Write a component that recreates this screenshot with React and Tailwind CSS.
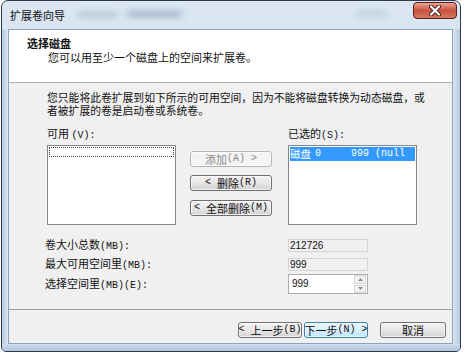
import React from 'react'

const Hint = ({ children }) => (
  <span className="font-['Liberation_Mono',monospace] text-[10px] whitespace-pre">{children}</span>
)

function Btn({ children, variant = 'normal', className = '' }) {
  const styles = {
    normal: 'border-[#707070] bg-linear-to-b from-[#f3f3f3] via-[#e6e6e6] to-[#d3d3d3] text-[#111]',
    disabled: 'border-[#b5b8ba] bg-[#f4f4f4] text-[#8a8a8a]',
    primary: 'border-[#3c7fb1] bg-linear-to-b from-[#eaf6fd] via-[#d9f0fc] to-[#bee6fd] text-[#111]',
  }
  return (
    <div
      className={`h-[16px] flex items-center justify-center rounded-[3px] border text-[11px] leading-none whitespace-nowrap shadow-[inset_0_0_0_1px_rgba(255,255,255,0.7)] ${styles[variant]} ${className}`}
    >
      {children}
    </div>
  )
}

function CloseButton() {
  return (
    <div className="absolute right-[3px] top-[1px] w-[44px] h-[17px] rounded-[4px] border border-[#5a2019] bg-linear-to-b from-[#e9a493] via-[#c9523c] to-[#d27b63] flex items-center justify-center">
      <svg width="14" height="11" viewBox="0 0 14 11">
        <path d="M3 1.5 L11 9.5 M11 1.5 L3 9.5" stroke="#4a1d17" strokeWidth="4" strokeLinecap="round" />
        <path d="M3 1.5 L11 9.5 M11 1.5 L3 9.5" stroke="#ffffff" strokeWidth="2.2" strokeLinecap="round" />
      </svg>
    </div>
  )
}

export default function App() {
  return (
    <div className="w-[466px] h-[359px] bg-white pl-[1px] overflow-hidden font-['Noto_Sans_CJK_SC',sans-serif] text-[#111]">
      <div className="w-[460px] h-[352px] border border-[#2c3a4b] rounded-t-[7px] rounded-b-[5px] overflow-hidden flex flex-col bg-linear-to-b from-[#dbe6f2] to-[#c4d6ea]">
        {/* title bar */}
        <div className="relative h-[28px] flex items-center pl-[8px]">
          <div className="absolute left-[75px] top-[11px] w-[40px] h-[5px] rounded-full bg-[#9aa9ba] blur-[3px] opacity-60" />
          <div className="absolute left-[125px] top-[10px] w-[55px] h-[6px] rounded-full bg-[#7f90a5] blur-[3px] opacity-60" />
          <div className="absolute left-[355px] top-[10px] w-[30px] h-[5px] rounded-full bg-[#a3b1c2] blur-[3px] opacity-50" />
          <span className="relative text-[11px] leading-none">扩展卷向导</span>
          <CloseButton />
        </div>

        <div className="flex h-[315px]">
          <div className="w-[6px] bg-linear-to-r from-[#b7cbe2] to-[#dce7f3]" />
          {/* client */}
          <div className="w-[445px] border border-[#8ea3ba] bg-[#f0f0f0] flex flex-col">
            <div className="h-[53px] bg-white border-b border-[#b4b4b4]">
              <div className="pt-[7px] pl-[18px] text-[11px] leading-[12px] font-bold">选择磁盘</div>
              <div className="mt-[2px] pl-[39px] text-[11px] leading-[12px]">您可以用至少一个磁盘上的空间来扩展卷。</div>
            </div>

            <div className="pl-[38px] pt-[8px] text-[10.8px] leading-[13px] whitespace-nowrap">
              <div>您只能将此卷扩展到如下所示的可用空间，因为不能将磁盘转换为动态磁盘，或</div>
              <div>者被扩展的卷是启动卷或系统卷。</div>
            </div>

            <div className="mt-[10px] pl-[38px] flex text-[11px] leading-[12px]">
              <div className="w-[241px]">
                可用 <Hint>(V):</Hint>
              </div>
              <div>
                已选的<Hint>(S):</Hint>
              </div>
            </div>

            <div className="mt-[3px] pl-[38px] flex">
              <div className="w-[129px] h-[80px] bg-white border border-[#828790] p-[1px]">
                <div className="h-[10px] border border-dotted border-[#444]" />
              </div>
              <div className="ml-[14px] w-[82px] pt-[6px] flex flex-col">
                <Btn variant="disabled">
                  添加<Hint>(A) &gt;</Hint>
                </Btn>
                <Btn className="mt-[8px]">
                  <Hint>&lt; </Hint>删除<Hint>(R)</Hint>
                </Btn>
                <Btn className="mt-[9px]">
                  <Hint>&lt; </Hint>全部删除<Hint>(M)</Hint>
                </Btn>
              </div>
              <div className="ml-[16px] w-[129px] h-[80px] bg-white border border-[#828790] p-[1px] overflow-hidden">
                <div className="h-[14px] bg-[#3399ff] text-white flex items-center whitespace-nowrap text-[10.5px] leading-none">
                  <span>磁盘</span>
                  <span className="ml-[4px] font-['Liberation_Mono',monospace] text-[10px]">0</span>
                  <span className="ml-[30px] font-['Liberation_Mono',monospace] text-[10px] whitespace-pre">999 (null</span>
                </div>
              </div>
            </div>

            <div className="pl-[36px] text-[11px] leading-[12px]">
              <div className="mt-[14px] flex items-center h-[13px]">
                <div className="w-[243px]">
                  卷大小总数<Hint>(MB):</Hint>
                </div>
                <div className="w-[80px] h-[13px] border border-[#d4d4d4] bg-[#f0f0f0] pl-[1px] flex items-center font-['Liberation_Sans',sans-serif] text-[10px]">
                  212726
                </div>
              </div>
              <div className="mt-[6px] flex items-center h-[13px]">
                <div className="w-[243px]">
                  最大可用空间里<Hint>(MB):</Hint>
                </div>
                <div className="w-[80px] h-[13px] border border-[#d4d4d4] bg-[#f0f0f0] pl-[1px] flex items-center font-['Liberation_Sans',sans-serif] text-[10px]">
                  999
                </div>
              </div>
              <div className="mt-[3px] flex items-center h-[20px]">
                <div className="w-[243px]">
                  选择空间里<Hint>(MB)(E):</Hint>
                </div>
                <div className="w-[80px] h-[20px] border border-[#abadb3] bg-white flex items-center">
                  <span className="pl-[3px] flex-1 font-['Liberation_Sans',sans-serif] text-[10px]">999</span>
                  <div className="w-[12px] h-[18px] mr-[1px] flex flex-col gap-[1px]">
                    <div className="flex-1 border border-[#d5d5d5] bg-[#f2f2f2] flex items-center justify-center">
                      <svg width="5" height="3" viewBox="0 0 5 3"><path d="M0 3 L2.5 0 L5 3 Z" fill="#8a8a8a" /></svg>
                    </div>
                    <div className="flex-1 border border-[#d5d5d5] bg-[#f2f2f2] flex items-center justify-center">
                      <svg width="5" height="3" viewBox="0 0 5 3"><path d="M0 0 L2.5 3 L5 0 Z" fill="#8a8a8a" /></svg>
                    </div>
                  </div>
                </div>
              </div>
            </div>

            <div className="mt-[15px] border-t border-[#a0a0a0]" />

            <div className="mt-[12px] pr-[6px] flex justify-end">
              <Btn className="w-[64px]">
                <Hint>&lt; </Hint>上一步<Hint>(B)</Hint>
              </Btn>
              <Btn variant="primary" className="w-[64px] ml-[2px]">
                下一步<Hint>(N) &gt;</Hint>
              </Btn>
              <Btn className="w-[66px] ml-[12px]">取消</Btn>
            </div>
          </div>
          <div className="flex-1 bg-linear-to-r from-[#dce7f3] to-[#b3c8df]" />
        </div>

        <div className="h-[7px] bg-linear-to-b from-[#cddcec] to-[#aec4dc]" />
      </div>
    </div>
  )
}
